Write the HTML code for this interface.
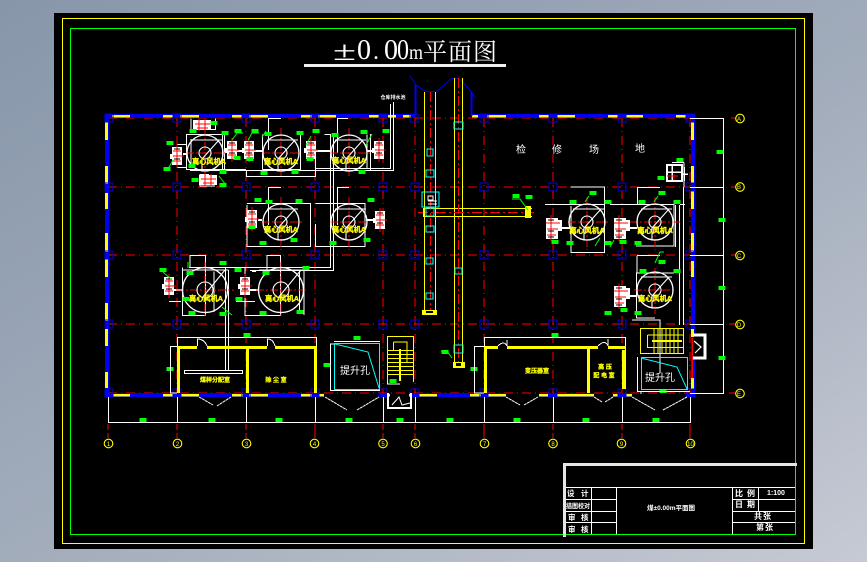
<!DOCTYPE html>
<html><head><meta charset="utf-8"><style>
html,body{margin:0;padding:0;width:867px;height:562px;overflow:hidden;background:linear-gradient(150deg,#8796aa 0%,#a3adbc 55%,#c6cad4 100%)}
svg{position:absolute;left:0;top:0;display:block}
text{font-family:"Liberation Sans","Noto Sans CJK SC",sans-serif}
</style></head><body>
<svg width="867" height="562" viewBox="0 0 867 562" xmlns="http://www.w3.org/2000/svg" shape-rendering="crispEdges">
<defs>
<g id="f" fill="none" stroke="#fff" shape-rendering="auto"><circle r="18" stroke-width="1.3"/><circle r="6" stroke-width="1.1"/><path d="M-3,6L14,-13M-14,-13H17M-3,6V18" stroke-width="1.1"/></g>
<g id="F" fill="none" stroke="#fff" shape-rendering="auto"><circle r="22.5" stroke-width="1.3"/><circle r="8" stroke-width="1.1"/><path d="M-3,8L20,-20M-22,-20H22" stroke-width="1.1"/></g>
<g id="m"><rect x="-5" y="-9" width="10" height="18" fill="#fff"/><rect x="-7" y="-2" width="2" height="5" fill="#fff"/><path d="M0,-12V12M-4,-5H4M-4,0H7M-4,5H4" stroke="#f00" stroke-width="1.4" fill="none"/><path d="M-3,-7H3M-3,3H3" stroke="#000" stroke-width="1"/></g>
<g id="M"><rect x="-6" y="-10" width="12" height="21" fill="#fff"/><rect x="5" y="-8" width="5" height="11" fill="#fff"/><path d="M-1,-13V13M-6,-5H8M-5,1H6M-5,7H4" stroke="#f00" stroke-width="1.2" fill="none"/><path d="M-4,-8H2M-4,3H2M-4,9H2" stroke="#000" stroke-width="1"/></g>
<g id="h"><rect x="-9" y="-5" width="18" height="10" fill="#fff"/><path d="M-7,-1H8M-5,3H6M-3,-6V6M3,-6V6" stroke="#f00" stroke-width="1.3" fill="none"/></g>
<rect id="c" x="-4" y="-4" width="8" height="8" fill="none" stroke="#0000e6" stroke-width="1.4"/>
<rect id="t" x="-3.5" y="-2" width="7" height="4" fill="#0f0"/>
</defs>

<rect x="54" y="13" width="759" height="536" fill="#000"/>
<rect x="62.5" y="18.5" width="742" height="525" fill="none" stroke="#ff0" stroke-width="1"/>
<rect x="70.5" y="28.5" width="725" height="506" fill="none" stroke="#0f0" stroke-width="1"/>

<!-- title -->
<g fill="#fff" style='font-family:"Liberation Serif","Noto Serif CJK SC",serif'>
<text x="333" y="60" font-size="27" textLength="23" lengthAdjust="spacingAndGlyphs" style='font-family:"Liberation Serif",serif'>±</text>
<text x="357" y="59" font-size="28" textLength="14" lengthAdjust="spacingAndGlyphs" style='font-family:"Liberation Serif",serif'>0</text>
<text x="373" y="59" font-size="24" style='font-family:"Liberation Serif",serif'>.</text>
<text x="384" y="59" font-size="28" textLength="14" lengthAdjust="spacingAndGlyphs" style='font-family:"Liberation Serif",serif'>0</text>
<text x="397" y="59" font-size="28" textLength="12" lengthAdjust="spacingAndGlyphs" style='font-family:"Liberation Serif",serif'>0</text>
<text x="409" y="59" font-size="20" textLength="14" lengthAdjust="spacingAndGlyphs" style='font-family:"Liberation Serif",serif'>m</text>
<text x="423" y="60" font-size="24" textLength="77" style='font-family:"Noto Serif CJK SC",serif' letter-spacing="3">平面图</text>
</g>
<rect x="304" y="64" width="202" height="3" fill="#f0f0f0"/>

<!-- red grid -->
<g stroke="#f00" stroke-width="1" fill="none" stroke-dasharray="9,4,1,4">
<path d="M108,118H690M108,187H690M108,255H690M108,324H690M108,393H690"/>
<path d="M108,118V393M177,118V393M246,118V393M315,118V393M383,118V393M415,118V393M484,118V393M553,118V393M622,118V393M690,118V393"/>
<path d="M108,424V438M177,424V438M246,424V438M383,424V438M415,424V438M622,424V438M553,424V438" stroke-dasharray="6,3"/>
<path d="M315,424V438M484,424V438M690,424V438" stroke-dasharray="none"/>
</g>
<g stroke="#f00" stroke-width="1" fill="none">
<path d="M731,118H736M731,187H736M731,255H736M729,324H736M729,393H736"/>
</g>

<!-- walls -->
<g fill="#0000f5">
<rect x="105" y="114" width="310" height="4"/><rect x="471" y="114" width="224" height="4"/>
<rect x="105" y="114" width="4" height="282"/>
<rect x="691" y="114" width="4" height="220"/><rect x="691" y="358" width="4" height="38"/>
<rect x="105" y="393" width="219" height="4"/><rect x="380" y="393" width="10" height="4"/><rect x="409" y="393" width="97" height="4"/><rect x="539" y="393" width="55" height="4"/><rect x="613" y="393" width="19" height="4"/><rect x="686" y="393" width="9" height="4"/>
</g>
<g fill="#ff0">
<path d="M112,115h18v2.5h-18zM163,115h10v2.5h-10zM180,115h19v2.5h-19zM232,115h10v2.5h-10zM249,115h19v2.5h-19zM301,115h11v2.5h-11zM318,115h18v2.5h-18zM369,115h10v2.5h-10zM388,115h8v2.5h-8zM403,115h8v2.5h-8zM472,115h6v2.5h-6zM487,115h19v2.5h-19zM539,115h10v2.5h-10zM557,115h18v2.5h-18zM608,115h10v2.5h-10zM626,115h17v2.5h-17zM676,115h10v2.5h-10z"/>
<path d="M105,122h3v18h-3zM105,166h3v18h-3zM105,193h3v16h-3zM105,233h3v19h-3zM105,259h3v18h-3zM105,303h3v18h-3zM105,329h3v17h-3zM105,372h3v16h-3z"/>
<path d="M691,122h3v18h-3zM691,166h3v17h-3zM691,191h3v18h-3zM691,233h3v19h-3zM691,261h3v16h-3zM691,329h3v8h-3zM691,378h3v11h-3z"/>
<path d="M113,394h17v2.5h-17zM163,394h10v2.5h-10zM181,394h18v2.5h-18zM232,394h11v2.5h-11zM249,394h19v2.5h-19zM301,394h11v2.5h-11zM319,394h5v2.5h-5zM389,394h1v2.5h-1zM409,394h2v2.5h-2zM419,394h18v2.5h-18zM470,394h11v2.5h-11zM488,394h18v2.5h-18zM539,394h9v2.5h-9zM557,394h37v2.5h-37zM613,394h5v2.5h-5zM626,394h6v2.5h-6z"/>
</g>
<rect x="691.5" y="338" width="1.5" height="40" fill="#f00"/>

<!-- columns -->
<g>
<use href="#c" x="109" y="118"/><use href="#c" x="177" y="118"/><use href="#c" x="246" y="118"/><use href="#c" x="315" y="118"/><use href="#c" x="383" y="118"/><use href="#c" x="414" y="118"/><use href="#c" x="484" y="118"/><use href="#c" x="553" y="118"/><use href="#c" x="622" y="118"/><use href="#c" x="690" y="118"/>
<use href="#c" x="109" y="187"/><use href="#c" x="177" y="187"/><use href="#c" x="246" y="187"/><use href="#c" x="315" y="187"/><use href="#c" x="383" y="187"/><use href="#c" x="415" y="187"/><use href="#c" x="484" y="187"/><use href="#c" x="553" y="187"/><use href="#c" x="622" y="187"/><use href="#c" x="690" y="187"/>
<use href="#c" x="109" y="255"/><use href="#c" x="177" y="255"/><use href="#c" x="246" y="255"/><use href="#c" x="315" y="255"/><use href="#c" x="383" y="255"/><use href="#c" x="415" y="255"/><use href="#c" x="484" y="255"/><use href="#c" x="553" y="255"/><use href="#c" x="622" y="255"/><use href="#c" x="690" y="255"/>
<use href="#c" x="109" y="324"/><use href="#c" x="177" y="324"/><use href="#c" x="246" y="324"/><use href="#c" x="315" y="324"/><use href="#c" x="383" y="324"/><use href="#c" x="415" y="324"/><use href="#c" x="484" y="324"/><use href="#c" x="553" y="324"/><use href="#c" x="622" y="324"/><use href="#c" x="690" y="324"/>
<use href="#c" x="109" y="393"/><use href="#c" x="177" y="393"/><use href="#c" x="246" y="393"/><use href="#c" x="315" y="393"/><use href="#c" x="383" y="393"/><use href="#c" x="415" y="393"/><use href="#c" x="484" y="393"/><use href="#c" x="553" y="393"/><use href="#c" x="622" y="393"/><use href="#c" x="690" y="393"/>
</g>

<!-- ducts -->
<path d="M410,76L416,85L425,91L430,92L437,91L444,85L451,79L456,78L461,80L468,88L475,97" fill="none" stroke="#0000f5" stroke-width="1" shape-rendering="auto"/>
<rect x="414.5" y="85" width="2" height="30" fill="#0000f5"/><rect x="470.5" y="92" width="2" height="24" fill="#0000f5"/>
<path d="M424.5,92V315M435.5,92V315M454.5,78V365M462.5,78V365M424,208.5H532M424,216.5H532" stroke="#ff0" stroke-width="1" fill="none"/>
<path d="M430.5,92V315M458.5,78V368M418,212.5H534" stroke="#f00" stroke-width="1.2" stroke-dasharray="10,3,2,3" fill="none"/>
<g fill="none" stroke="#0ff" stroke-width="1.3">
<rect x="422" y="192" width="17" height="15"/><rect x="426" y="208" width="8" height="8"/>
<rect x="454" y="122" width="9" height="7"/><rect x="427" y="149" width="6" height="7"/><rect x="426" y="170" width="8" height="7"/><rect x="426" y="226" width="8" height="6"/><rect x="426" y="258" width="7" height="6"/><rect x="426" y="293" width="7" height="6"/><rect x="454" y="345" width="9" height="8"/><rect x="455" y="268" width="7" height="6"/>
</g>
<path d="M428,196h5v4h-5zM428,201h9M428,204h9" stroke="#fff" stroke-width="1" fill="none"/>
<rect x="525" y="206" width="6" height="12" fill="#ff0"/><rect x="423" y="208" width="2" height="9" fill="#ff0"/><rect x="422" y="310" width="15" height="5" fill="#ff0"/><rect x="453" y="362" width="12" height="6" fill="#ff0"/><rect x="456" y="363" width="5" height="3" fill="#000"/><rect x="426" y="311" width="7" height="2" fill="#000"/>

<!-- white pipes -->
<g fill="none" stroke="#fff" stroke-width="1">
<path d="M390.5,104V168.5H316M393.5,102V170.5H190"/>
<path d="M330.5,135V267.5H189M333.5,135V270.5H250"/>
<path d="M225.5,268V370M228.5,270V370M184.5,370.5H242.5V373.5H184.5Z"/>
<path d="M246.5,170V176.5H315.5V153M190,169.5H246"/>
<path d="M268,118.5H281M268.5,118V150M337,118.5H348M337.5,118V153M268.5,187.5H281M268.5,187V225M337.5,187.5H349M337.5,187V225"/>
<path d="M247,203.5H310.5V246.5H247V205M315.5,203.5H365V246.5H315.5V224"/>
<path d="M182.5,267.5V315.5H205.5V255.5H190V267M228.5,270H204M245,267.5V315.5H280.5V255.5H267V270M304,270V315"/>
<path d="M214,271.5V312M252,271.5H256M299.5,270V312"/>
<path d="M169,301.5H181M236,301.5H255"/>
<path d="M186.5,134.5H222.5V169.5H186.5ZM191,139V165M262.5,134.5V169.5M300.5,134.5V169.5H262.5M224.5,134V170M324.5,134.5H331M367,134.5V169M370.5,134V170.5"/>
<path d="M191,118.5V129.5H215.5V118.5M209,174.5H200V186H215M177,144.5H186.5M177,167.5H186"/>
<path d="M545,204.5H604.5V252.5H571V206M570.5,187H604.5V205M610,204.5H674V246H636M637,187.5H660M637.5,187V205M637,255.5H660M637,256V273H674M636.5,272.5V318H655M675.5,205V247M679.5,205V325M683.5,187V325M672,162.5H684M684,162.5V187"/>
<path d="M680,204.5H685M632,320H660V373"/>
<path d="M690,118.5H723.5V393.5H690M690,187.5H723.5M690,255.5H723.5M690,324.5H723.5"/>
<path d="M108.5,397V422.5H690.5V397M177.5,397V422M246.5,397V422M315.5,397V422M383.5,397V422M415.5,397V422M484.5,397V422M553.5,397V422M622.5,397V422"/>
</g>
<!-- machines' duct ties -->
<path d="M183,154H187M237,151H245M254,151H262M316,151H331M367,151H374M258,220H262M366,220H373M174,290H182M250,290H258M558,228H570M626,228H637M626,296H637" stroke="#fff" stroke-width="2" fill="none"/>

<!-- red centre marks around fans -->
<g stroke="#f00" stroke-width="1" fill="none" stroke-dasharray="8,2,2,2">
<path d="M186,153H226M205,128V176M262,153H300M281,128V176M330,153H370M349,128V176M262,222H302M281,197V250M330,222H368M349,197V250M176,290H234M205,262V318M256,290H308M281,262V318M568,222H608M587,197V250M630,222H682M655,197V250M634,290H676M655,268V314"/>
</g>

<!-- fans -->
<use href="#f" x="205" y="153"/><use href="#f" x="281" y="153"/><use href="#f" x="349" y="153"/>
<use href="#f" x="281" y="222"/><use href="#f" x="349" y="222"/>
<use href="#F" x="205" y="290"/><use href="#F" x="281" y="290"/>
<use href="#f" x="587" y="222"/><use href="#f" x="655" y="222"/><use href="#f" x="655" y="290"/>

<!-- machines -->
<use href="#m" x="177" y="156"/><use href="#m" x="232" y="150"/><use href="#m" x="249" y="150"/><use href="#m" x="311" y="150"/><use href="#m" x="379" y="150"/>
<use href="#m" x="252" y="219"/><use href="#m" x="380" y="220"/><use href="#m" x="169" y="286"/><use href="#m" x="245" y="286"/>
<use href="#h" x="202" y="125"/><use href="#h" x="208" y="180"/>
<use href="#M" x="552" y="228"/><use href="#M" x="620" y="228"/><use href="#M" x="620" y="296"/>
<rect x="667" y="165" width="15" height="16" fill="none" stroke="#fff" stroke-width="2"/><path d="M667,172H682M672,165V181M684,167V181M682,174H688" stroke="#fff" stroke-width="1.5"/><path d="M667,176H678M674,174V180" stroke="#f00"/>

<!-- yellow fan labels -->
<g fill="#ff0" stroke="#ff0" stroke-width=".3" font-size="7.2" font-weight="bold" text-anchor="middle">
<text x="209" y="164">离心风机A</text><text x="281" y="164">离心风机A</text><text x="349" y="163">离心风机A</text>
<text x="281" y="232">离心风机A</text><text x="349" y="232">离心风机A</text>
<text x="206" y="301">离心风机A</text><text x="282" y="301">离心风机A</text>
<text x="587" y="233" font-size="7.6">离心风机A</text><text x="655" y="233" font-size="7.6">离心风机A</text><text x="655" y="301">离心风机A</text>
</g>

<!-- green tags -->
<g>
<use href="#t" x="225" y="133"/><use href="#t" x="238" y="131"/><use href="#t" x="255" y="131"/><use href="#t" x="170" y="143"/><use href="#t" x="193" y="131"/><use href="#t" x="167" y="169"/><use href="#t" x="223" y="185"/><use href="#t" x="195" y="180"/><use href="#t" x="223" y="172"/><use href="#t" x="264" y="173"/><use href="#t" x="268" y="134"/><use href="#t" x="214" y="123"/><use href="#t" x="237" y="158"/><use href="#t" x="250" y="159"/><use href="#t" x="192" y="166"/>
<use href="#t" x="300" y="133"/><use href="#t" x="316" y="131"/><use href="#t" x="364" y="132"/><use href="#t" x="386" y="131"/><use href="#t" x="335" y="135"/><use href="#t" x="310" y="159"/><use href="#t" x="362" y="172"/><use href="#t" x="295" y="172"/>
<use href="#t" x="258" y="200"/><use href="#t" x="299" y="201"/><use href="#t" x="371" y="200"/><use href="#t" x="269" y="202"/><use href="#t" x="252" y="227"/><use href="#t" x="263" y="243"/><use href="#t" x="294" y="240"/><use href="#t" x="333" y="243"/><use href="#t" x="367" y="240"/>
<use href="#t" x="223" y="263"/><use href="#t" x="163" y="270"/><use href="#t" x="238" y="270"/><use href="#t" x="306" y="268"/><use href="#t" x="190" y="273"/><use href="#t" x="266" y="273"/><use href="#t" x="186" y="299"/><use href="#t" x="239" y="299"/><use href="#t" x="192" y="313"/><use href="#t" x="223" y="314"/><use href="#t" x="263" y="313"/><use href="#t" x="300" y="312"/>
<use href="#t" x="247" y="335"/><use href="#t" x="170" y="369"/><use href="#t" x="327" y="365"/><use href="#t" x="357" y="338"/><use href="#t" x="474" y="369"/><use href="#t" x="555" y="335"/><use href="#t" x="445" y="352"/><use href="#t" x="393" y="381"/><use href="#t" x="663" y="391"/>
<use href="#t" x="143" y="420"/><use href="#t" x="212" y="420"/><use href="#t" x="279" y="420"/><use href="#t" x="349" y="420"/><use href="#t" x="400" y="420"/><use href="#t" x="450" y="420"/><use href="#t" x="517" y="420"/><use href="#t" x="586" y="420"/><use href="#t" x="656" y="420"/>
<use href="#t" x="608" y="202"/><use href="#t" x="573" y="202"/><use href="#t" x="642" y="202"/><use href="#t" x="677" y="202"/><use href="#t" x="593" y="193"/><use href="#t" x="662" y="193"/><use href="#t" x="608" y="243"/><use href="#t" x="570" y="243"/><use href="#t" x="555" y="242"/><use href="#t" x="623" y="242"/><use href="#t" x="638" y="243"/>
<use href="#t" x="662" y="262"/><use href="#t" x="677" y="271"/><use href="#t" x="643" y="271"/><use href="#t" x="608" y="313"/><use href="#t" x="624" y="310"/><use href="#t" x="638" y="313"/><use href="#t" x="680" y="160"/><use href="#t" x="661" y="178"/><use href="#t" x="720" y="152"/><use href="#t" x="722" y="220"/><use href="#t" x="722" y="288"/><use href="#t" x="722" y="358"/><use href="#t" x="529" y="197"/><use href="#t" x="516" y="196"/>
</g>
<g stroke="#0f0" stroke-width="1" fill="none" shape-rendering="auto">
<path d="M232,140L237,133H243M248,140L252,133H259M167,171L173,160M226,185L219,176M311,136L306,145M372,134L366,145M188,262V268M163,272L172,280M232,315L222,307M266,131L262,137M600,238L595,246M614,240L610,247"/>
<path d="M512,199H520L528,210M589,196L585,202M658,196L654,202M664,252H660L655,263"/>
<path d="M441,351H447L452,358"/>
</g>

<!-- rooms -->
<g fill="none" stroke="#fff" stroke-width="1">
<path d="M177,337.5H316.5M177.5,337V348M316.5,337V348M170.5,346.5H177M170.5,346V393H177"/>
<path d="M484,337.5H625.5M484.5,337V348M625.5,337V350M474.5,346.5H484M474.5,346V393H484"/>
<path d="M197.5,346V339Q204,339 207,346M267.5,346V339Q273,339 275,346M498,346Q504,340 507,346V340M598,346Q605,339 608,346V339"/>
</g>
<g fill="#ff0">
<path d="M177,346h20v3h-20zM207,346h60v3h-60zM275,346h42v3h-42zM177,346h3v47h-3zM246,346h3v47h-3zM314,346h3v47h-3z"/>
<path d="M484,346h14v3h-14zM507,346h91v3h-91zM608,346h18v3h-18zM484,346h3v47h-3zM587,346h3v47h-3zM622,350h4v39h-4z"/>
</g>

<!-- hoist boxes -->
<g fill="none" stroke="#fff" stroke-width="1">
<path d="M334,341.5H380M330.5,344V390.5H380M330,344H334"/>
<path d="M637.5,357V391.5H690M641,391.5V394"/>
</g>
<g fill="none" stroke="#0ff" stroke-width="1">
<rect x="334.5" y="343.5" width="45" height="46"/>
<rect x="641.5" y="357.5" width="46" height="32"/>
<path d="M335,344L368,352L379,388M641,358L677,367L687,389" shape-rendering="auto"/>
</g>
<text x="340" y="374" font-size="10" fill="#fff">提升孔</text>
<text x="645" y="381" font-size="10" fill="#fff">提升孔</text>

<!-- stairs left -->
<g fill="none" stroke="#ff0" stroke-width="1">
<path d="M387.5,336.5H413.5M387.5,336V382M413.5,336V382M393.5,342H407V363M393.5,342V350M387,350.5H414M387,354.5H414M387,358.5H414M387,362.5H414M387,366.5H414M387,370.5H414M387,374.5H414"/>
</g>
<rect x="399" y="349" width="2" height="32" fill="#ff0"/>
<path d="M388,393V408H411V393" fill="none" stroke="#fff" stroke-width="2"/>
<path d="M392,405L399,397L402,405L410,403" fill="none" stroke="#fff" stroke-width="1" shape-rendering="auto"/>
<path d="M387.5,381V384H400" fill="none" stroke="#fff"/>

<!-- stairs right -->
<g fill="none" stroke="#ff0" stroke-width="1">
<path d="M640.5,328.5H683.5V353.5H640.5ZM647.5,335H684M647.5,335V347.5H683M654,329V353M658,329V353M662,329V353M666,329V353M670,329V353M674,329V353M678,329V353"/>
</g>
<rect x="652" y="340" width="30" height="2" fill="#ff0"/>
<path d="M693,335H705V358H693" fill="none" stroke="#fff" stroke-width="3"/>
<path d="M694,341L701,347L695,353" fill="none" stroke="#fff" stroke-width="1.2" shape-rendering="auto"/>

<!-- door swings -->
<g fill="none" stroke="#fff" stroke-width="1" stroke-dasharray="3,0.5" shape-rendering="auto">
<path d="M199,397L213,405M217,406L231,397M325,397L347,410M357,410L379,397M506,397L520,405M524,405L538,397M594,397L602,402M605,402L613,397M632,397L655,410M663,410L687,397"/>
</g>

<!-- room labels -->
<g fill="#ff0" font-size="6" font-weight="bold" text-anchor="middle" stroke="#ff0" stroke-width=".25">
<text x="215" y="382">煤样分配室</text><text x="276" y="382">除 尘 室</text><text x="537" y="373">变压器室</text>
<text x="605" y="369">高 压</text><text x="604" y="377.5">配 电 室</text>
</g>

<!-- white labels -->
<g fill="#fff" font-size="10">
<text x="516" y="153">检</text><text x="552" y="153">修</text><text x="589" y="153">场</text><text x="635" y="152">地</text>
</g>
<text x="393" y="99" font-size="5" fill="#fff" text-anchor="middle" font-weight="bold">仓库排水池</text>

<!-- axis bubbles -->
<g fill="none" stroke="#ff0" stroke-width="1.1" shape-rendering="auto">
<circle cx="108.5" cy="443.5" r="4.3"/><circle cx="177.5" cy="443.5" r="4.3"/><circle cx="246.5" cy="443.5" r="4.3"/><circle cx="314.5" cy="443.5" r="4.3"/><circle cx="383" cy="443.5" r="4.3"/><circle cx="415.5" cy="443.5" r="4.3"/><circle cx="484.5" cy="443.5" r="4.3"/><circle cx="553" cy="443.5" r="4.3"/><circle cx="621.5" cy="443.5" r="4.3"/><circle cx="690.5" cy="443.5" r="4.3"/>
<circle cx="740" cy="118.5" r="4.3"/><circle cx="740" cy="187" r="4.3"/><circle cx="740" cy="255.5" r="4.3"/><circle cx="740" cy="324.5" r="4.3"/><circle cx="740" cy="393.5" r="4.3"/>
</g>
<g fill="#ff0" font-size="6" text-anchor="middle">
<text x="108.5" y="446">1</text><text x="177.5" y="446">2</text><text x="246.5" y="446">3</text><text x="314.5" y="446">4</text><text x="383" y="446">5</text><text x="415.5" y="446">6</text><text x="484.5" y="446">7</text><text x="553" y="446">8</text><text x="621.5" y="446">9</text><text x="690.5" y="446">10</text>
<text x="739" y="121">A</text><text x="739" y="189">B</text><text x="739" y="258">C</text><text x="739" y="327">D</text><text x="739" y="396">E</text>
</g>

<!-- title block -->
<rect x="563" y="463" width="234" height="3" fill="#e6e6e6"/><rect x="563" y="463" width="3" height="74" fill="#e6e6e6"/>
<g stroke="#fff" stroke-width="1" fill="none">
<path d="M566,487.5H795M566,499.5H616M566,511.5H616M566,522.5H616M732,499.5H795M732,511.5H795M732,522.5H795"/>
<path d="M591.5,488V534M616.5,488V534M732.5,488V534M758.5,488V511"/>
</g>
<g fill="#fff" font-size="7.5" font-weight="bold">
<text x="567" y="496">设</text><text x="581" y="496">计</text>
<text x="566" y="508" font-size="6.5" textLength="24" lengthAdjust="spacingAndGlyphs">描图校对</text>
<text x="568" y="520">审</text><text x="581" y="520">核</text>
<text x="568" y="532">审</text><text x="581" y="532">核</text>
<text x="735" y="496" font-size="8">比</text><text x="747" y="496" font-size="8">例</text>
<text x="735" y="507" font-size="8">日</text><text x="747" y="507" font-size="8">期</text>
<text x="767" y="495" font-size="7">1:100</text>
<text x="754" y="519" font-size="8">共</text><text x="763" y="519" font-size="8">张</text>
<text x="756" y="530" font-size="8">第</text><text x="765" y="530" font-size="8">张</text>
<text x="647" y="510" font-size="6.5">煤±0.00m平面图</text>
</g>
</svg>
</body></html>
